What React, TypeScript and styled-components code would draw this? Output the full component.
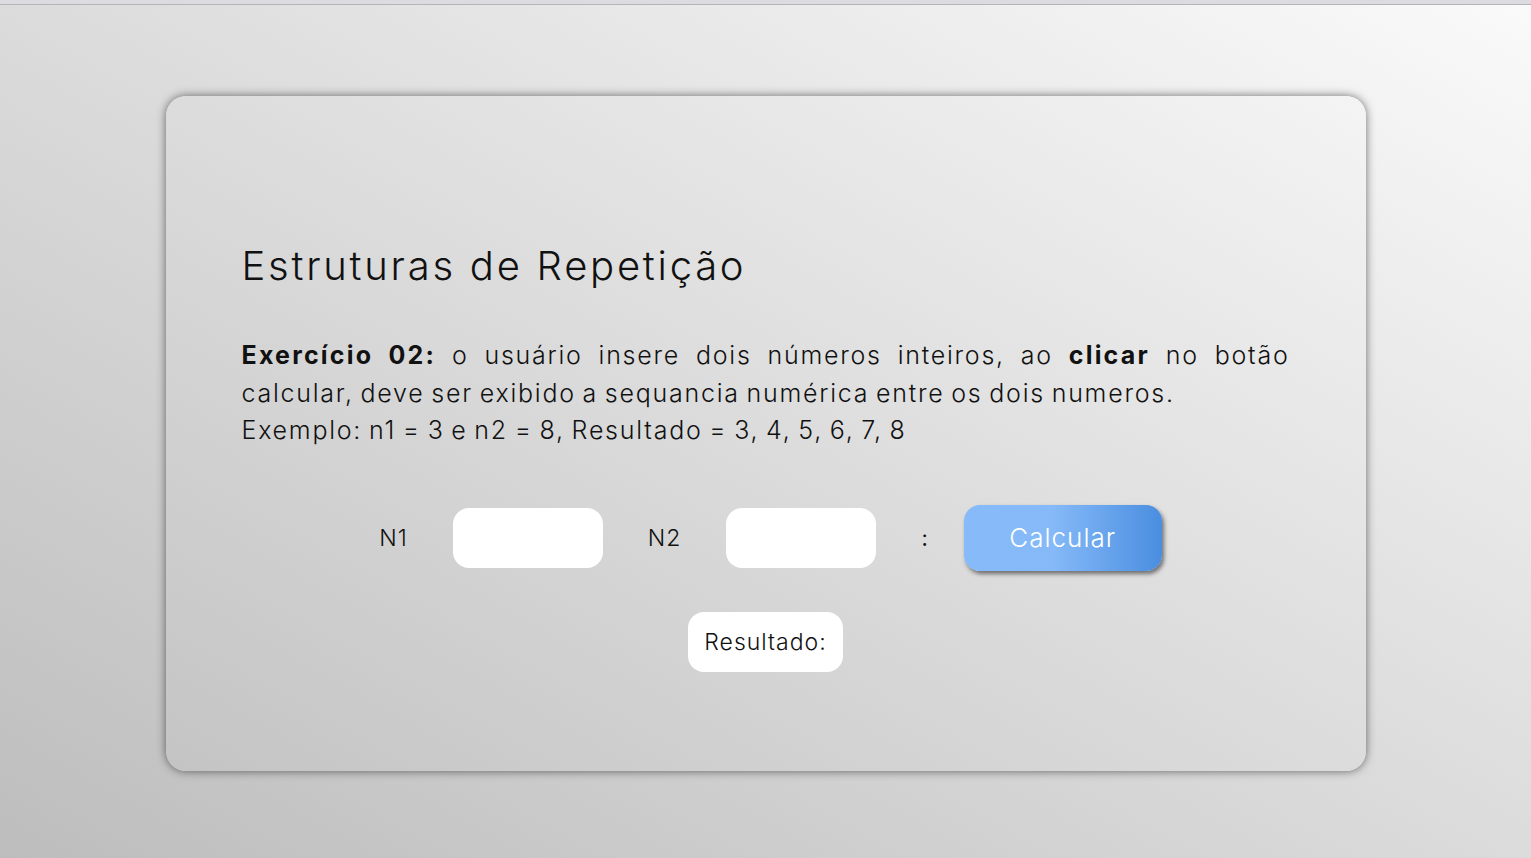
import { createGlobalStyle, styled } from 'styled-components';

const GlobalStyle = createGlobalStyle`
  html, body {
    margin: 0;
    padding: 0;
  }
  body {
    min-height: 100vh;
    font-family: 'Inter', 'Open Sans', sans-serif;
    color: #111;
    background: linear-gradient(to top right, #bdbdbd, #fafafa);
    border-top: 4px solid #dcdce0;
    box-shadow: inset 0 1px 0 #b4b4b8;
    box-sizing: border-box;
  }
`;

const Page = styled.main`
  display: flex;
  justify-content: center;
  padding-top: 92px;
`;

const Card = styled.section`
  width: 1200px;
  height: 675px;
  box-sizing: border-box;
  padding: 140px 76px 0;
  border-radius: 20px;
  background: linear-gradient(to top right, #c4c4c4, #f4f4f4);
  box-shadow: 0 0 10px rgba(0, 0, 0, 0.55);
  display: flex;
  flex-direction: column;
`;

const Title = styled.h1`
  margin: 0;
  font-size: 40px;
  font-weight: 300;
  line-height: 60px;
  letter-spacing: 2.75px;
`;

const Statement = styled.p`
  margin: 41px 0 0;
  font-size: 25px;
  font-weight: 300;
  line-height: 37.5px;
  text-align: justify;
  letter-spacing: 1.75px;
  word-spacing: -2px;

  strong {
    font-weight: 700;
    letter-spacing: 2.2px;
  }
`;

const FormRow = styled.div`
  margin-top: 55px;
  display: flex;
  align-items: center;
  justify-content: center;
  gap: 45px;
  padding-left: 10px;
`;

const Label = styled.label`
  font-size: 23px;
  font-weight: 300;
  letter-spacing: 1px;
`;

const NumberInput = styled.input`
  width: 150px;
  height: 60px;
  box-sizing: border-box;
  border: none;
  border-radius: 16px;
  background: #fff;
  font-family: inherit;
  font-size: 22px;
  padding: 0 14px;
  outline: none;
`;

const Colon = styled.span`
  font-size: 22px;
  margin-right: -9px;
`;

const CalcButton = styled.button`
  width: 198px;
  height: 66px;
  border: none;
  border-radius: 16px;
  background: linear-gradient(to right, #87baf9 0%, #85b9f8 45%, #4a8ee0 100%);
  box-shadow: 2px 3px 4px rgba(0, 0, 0, 0.5);
  color: #fff;
  font-family: inherit;
  font-size: 26px;
  font-weight: 300;
  letter-spacing: 1px;
  cursor: pointer;
`;

const ResultBox = styled.output`
  align-self: center;
  margin-top: 41px;
  height: 60px;
  box-sizing: border-box;
  padding: 0 16px;
  display: flex;
  align-items: center;
  background: #fff;
  border-radius: 16px;
  font-size: 23px;
  font-weight: 300;
  letter-spacing: 1px;
`;

export default function App() {
  return (
    <>
      <GlobalStyle />
      <Page>
        <Card>
          <Title>Estruturas de Repetição</Title>
          <Statement>
            <strong>Exercício 02:</strong> o usuário insere dois números inteiros, ao{' '}
            <strong>clicar</strong> no botão calcular, deve ser exibido a sequancia numérica
            entre os dois numeros.
            <br />
            Exemplo: n1 = 3 e n2 = 8, Resultado = 3, 4, 5, 6, 7, 8
          </Statement>
          <FormRow>
            <Label htmlFor="n1">N1</Label>
            <NumberInput id="n1" type="number" />
            <Label htmlFor="n2">N2</Label>
            <NumberInput id="n2" type="number" />
            <Colon>:</Colon>
            <CalcButton type="button">Calcular</CalcButton>
          </FormRow>
          <ResultBox>Resultado:</ResultBox>
        </Card>
      </Page>
    </>
  );
}
